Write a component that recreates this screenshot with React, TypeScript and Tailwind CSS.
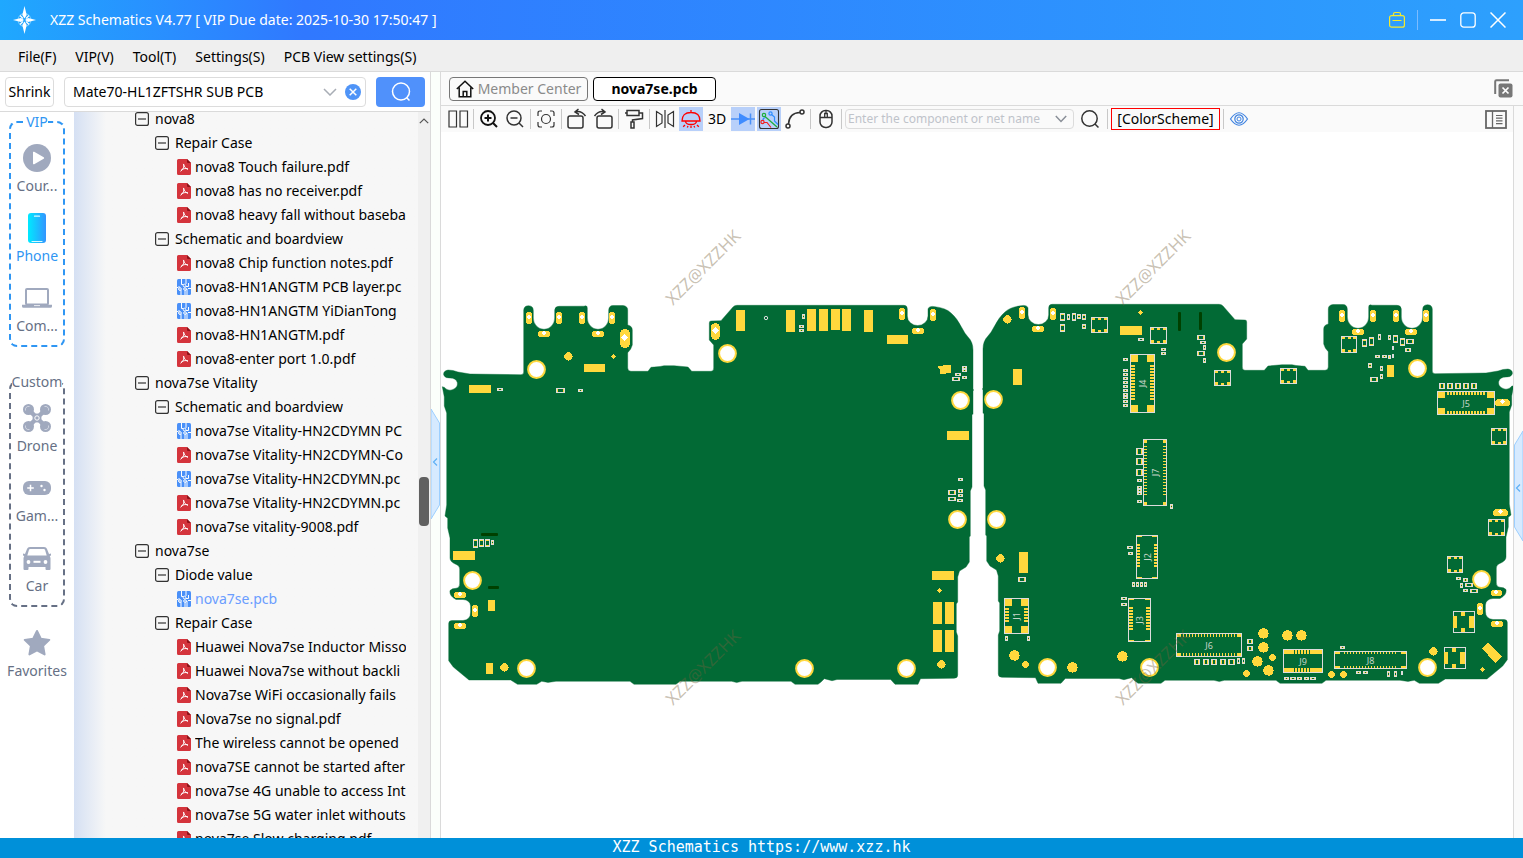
import React from "react";

type Box = [number, number, number, number];
type Point = [number, number];
type Dot = [number, number, number];

/* ---------- icons ---------- */

function LogoIcon() {
  return (
    <svg width="26" height="30" viewBox="0 0 26 30" aria-hidden="true">
      <circle cx="12.500" cy="15" r="6.500" fill="none" stroke="#7fd0ff" strokeWidth="1" />
      <path d="M12.500 1l2.200 9-2.200 3.400-2.200-3.400zM12.500 29l2.200-9-2.200-3.400-2.200 3.400zM1 15l8-2 3 2-3 2zM24 15l-8-2-3 2 3 2z" fill="#fff" />
      <path d="M8 10.500l3 3M17 10.500l-3 3M8 19.500l3-3M17 19.500l-3-3" stroke="#fff" strokeWidth="1.200" />
    </svg>
  );
}

function PdfIcon() {
  return (
    <svg width="14" height="16" viewBox="0 0 14 16" className="shrink-0" aria-hidden="true">
      <path d="M1.500 0H10l4 4v10.500a1.500 1.500 0 0 1-1.500 1.500h-11A1.500 1.500 0 0 1 0 14.500v-13A1.500 1.500 0 0 1 1.500 0z" fill="#d4343c" />
      <path d="M10 0l4 4h-3a1 1 0 0 1-1-1z" fill="#8e1218" />
      <path d="M6.600 5.200c.9 1 .3 2.600-.5 4.200-.7 1.300-1.500 2.300-2.300 2.700M6.600 5.600c.2 2 1.200 3.300 4 4.700M4.600 10.700c1.500-1 3.500-1.400 5.900-1.100" fill="none" stroke="#fff" strokeWidth="1" strokeLinecap="round" />
    </svg>
  );
}

function PcbIcon() {
  return (
    <svg width="14" height="16" viewBox="0 0 14 16" className="shrink-0" aria-hidden="true">
      <rect width="14" height="16" rx="1.500" fill="#4a90f8" />
      <path d="M4.500 0v5.500h2M9 0v5M9 7.500h2.500V4M14 9.500h-3M2 7v4M2 11h2v5M8 16v-4.500l2-1.500V16M0 8.500h1" fill="none" stroke="#fff" strokeWidth="1" />
      <g fill="#4a90f8" stroke="#fff" strokeWidth="1">
        <circle cx="7.500" cy="6.500" r="1.300" />
        <circle cx="3" cy="10" r="1.300" />
        <circle cx="8" cy="10" r="1.300" />
      </g>
    </svg>
  );
}

function CollapseIcon() {
  return (
    <svg width="14" height="14" viewBox="0 0 14 14" className="shrink-0" aria-hidden="true">
      <rect x=".6" y=".6" width="12.800" height="12.800" rx="2" fill="none" stroke="#333" strokeWidth="1.200" />
      <path d="M3 7h8" stroke="#333" strokeWidth="1.200" />
    </svg>
  );
}

function CourseIcon() {
  return (
    <svg width="28" height="28" viewBox="0 0 28 28" aria-hidden="true">
      <circle cx="14" cy="14" r="14" fill="#a0a9be" />
      <path d="M10 8.500v11a.8.800 0 0 0 1.200.7l9.500-5.500a.8.800 0 0 0 0-1.400l-9.500-5.500a.8.800 0 0 0-1.200.7z" fill="#fff" />
    </svg>
  );
}

function PhoneIcon() {
  return (
    <svg width="18" height="30" viewBox="0 0 18 30" aria-hidden="true">
      <defs>
        <linearGradient id="phone-fill" x1="0" x2="1" y1="0" y2="0">
          <stop offset="0" stopColor="#00eaff" />
          <stop offset="1" stopColor="#3395ff" />
        </linearGradient>
      </defs>
      <rect width="18" height="30" rx="3" fill="url(#phone-fill)" />
      <path d="M6.500 3.200h5M4 28.500h10" stroke="#d8fbff" strokeWidth="1.200" strokeLinecap="round" />
    </svg>
  );
}

function LaptopIcon() {
  return (
    <svg width="30" height="20" viewBox="0 0 30 20" aria-hidden="true">
      <rect x="4" y="1" width="22" height="15.500" rx="1" fill="none" stroke="#a0a9be" strokeWidth="2" />
      <path d="M0 16.800h30v1.400a1.500 1.500 0 0 1-1.500 1.500h-27A1.500 1.500 0 0 1 0 18.200z" fill="#a0a9be" />
      <path d="M12 17.600h6" stroke="#fff" strokeWidth=".8" />
    </svg>
  );
}

function DroneIcon() {
  return (
    <svg width="28" height="28" viewBox="0 0 28 28" aria-hidden="true">
      <path d="M6 6l16 16M22 6L6 22" stroke="#a0a9be" strokeWidth="4.500" />
      <g fill="#a0a9be">
        <circle cx="5.500" cy="5.500" r="5.500" />
        <circle cx="22.500" cy="5.500" r="5.500" />
        <circle cx="5.500" cy="22.500" r="5.500" />
        <circle cx="22.500" cy="22.500" r="5.500" />
        <circle cx="14" cy="14" r="4.500" />
      </g>
      <g fill="none" stroke="#dde1ea" strokeWidth=".8">
        <path d="M2.500 6.500a3.200 3.200 0 0 1 4-4M25.500 6.500a3.200 3.200 0 0 0-4-4M2.500 21.500a3.200 3.200 0 0 0 4 4M25.500 21.500a3.200 3.200 0 0 1-4 4" />
      </g>
      <circle cx="14" cy="14" r="2.200" fill="none" stroke="#fff" strokeWidth="1" />
    </svg>
  );
}

function GameIcon() {
  return (
    <svg width="28" height="14" viewBox="0 0 28 14" aria-hidden="true">
      <rect width="28" height="14" rx="6" fill="#a0a9be" />
      <path d="M7.500 3.700v6.600M4.200 7h6.600" stroke="#fff" strokeWidth="1.500" />
      <circle cx="18.500" cy="5" r="1.200" fill="#fff" />
      <circle cx="21.500" cy="9" r="1.200" fill="#fff" />
    </svg>
  );
}

function CarIcon() {
  return (
    <svg width="28" height="23" viewBox="0 0 28 23" aria-hidden="true">
      <path d="M7 0h14c1.500 0 2.500.7 3 2l2 5 2-.5v2l-1.200.5.7 2V22a1 1 0 0 1-1 1h-3a1 1 0 0 1-1-1v-2H5.500v2a1 1 0 0 1-1 1h-3a1 1 0 0 1-1-1V11l.7-2L0 8.500v-2L2 7l2-5C4.500.7 5.500 0 7 0zM7.200 2c-.6 0-1 .3-1.200.8L4.300 8.500h19.400L22 2.800c-.2-.5-.6-.8-1.200-.8z" fill="#a0a9be" />
      <circle cx="5.500" cy="15" r="1.900" fill="#fff" />
      <circle cx="22.500" cy="15" r="1.900" fill="#fff" />
      <rect x="10.500" y="13.800" width="7" height="2" fill="#fff" />
    </svg>
  );
}

function StarIcon() {
  return (
    <svg width="28" height="28" viewBox="0 0 28 28" aria-hidden="true">
      <path d="M14 2l3.800 7.700 8.500 1.200-6.200 6 1.500 8.500L14 21.400l-7.600 4 1.500-8.500-6.200-6 8.500-1.200z" fill="#a0a9be" stroke="#a0a9be" strokeWidth="2" strokeLinejoin="round" />
    </svg>
  );
}

function Glyph({ children, size = 22 }: { children: React.ReactNode; size?: number }) {
  return (
    <svg width={size} height={size} viewBox="0 0 22 22" fill="none" stroke="#333" strokeWidth="1.500" aria-hidden="true">
      {children}
    </svg>
  );
}

/* ---------- tree ---------- */

type Kind = "group" | "folder" | "pdf" | "pcb";
const tree: { kind: Kind; label: string; current?: boolean }[] = [
  { kind: "group", label: "nova8" },
  { kind: "folder", label: "Repair Case" },
  { kind: "pdf", label: "nova8 Touch failure.pdf" },
  { kind: "pdf", label: "nova8 has no receiver.pdf" },
  { kind: "pdf", label: "nova8 heavy fall without baseba" },
  { kind: "folder", label: "Schematic and boardview" },
  { kind: "pdf", label: "nova8 Chip function notes.pdf" },
  { kind: "pcb", label: "nova8-HN1ANGTM PCB layer.pc" },
  { kind: "pcb", label: "nova8-HN1ANGTM YiDianTong" },
  { kind: "pdf", label: "nova8-HN1ANGTM.pdf" },
  { kind: "pdf", label: "nova8-enter port 1.0.pdf" },
  { kind: "group", label: "nova7se Vitality" },
  { kind: "folder", label: "Schematic and boardview" },
  { kind: "pcb", label: "nova7se Vitality-HN2CDYMN PC" },
  { kind: "pdf", label: "nova7se Vitality-HN2CDYMN-Co" },
  { kind: "pcb", label: "nova7se Vitality-HN2CDYMN.pc" },
  { kind: "pdf", label: "nova7se Vitality-HN2CDYMN.pc" },
  { kind: "pdf", label: "nova7se vitality-9008.pdf" },
  { kind: "group", label: "nova7se" },
  { kind: "folder", label: "Diode value" },
  { kind: "pcb", label: "nova7se.pcb", current: true },
  { kind: "folder", label: "Repair Case" },
  { kind: "pdf", label: "Huawei Nova7se Inductor Misso" },
  { kind: "pdf", label: "Huawei Nova7se without backli" },
  { kind: "pdf", label: "Nova7se WiFi occasionally fails" },
  { kind: "pdf", label: "Nova7se no signal.pdf" },
  { kind: "pdf", label: "The wireless cannot be opened" },
  { kind: "pdf", label: "nova7SE cannot be started after" },
  { kind: "pdf", label: "nova7se 4G unable to access Int" },
  { kind: "pdf", label: "nova7se 5G water inlet withouts" },
  { kind: "pdf", label: "nova7se Slow charging.pdf" },
];

const indent: Record<Kind, string> = {
  group: "pl-[61px] gap-1.5",
  folder: "pl-[81px] gap-1.5",
  pdf: "pl-[103px] gap-1",
  pcb: "pl-[103px] gap-1",
};

function FileTree() {
  return (
    <ul className="-mt-[5px] pr-3">
      {tree.map((node, i) => (
        <li key={i}>
          <button
            type="button"
            className={`flex h-6 w-full items-center overflow-hidden text-left whitespace-nowrap ${indent[node.kind]} ${node.current ? "text-[#6a9dff]" : "text-black"}`}
          >
            {node.kind === "pdf" ? <PdfIcon /> : node.kind === "pcb" ? <PcbIcon /> : <CollapseIcon />}
            <span className="min-w-0 flex-1 overflow-hidden">{node.label}</span>
          </button>
        </li>
      ))}
    </ul>
  );
}

/* ---------- board drawing ---------- */

const OUTLINE =
  "M443.700 375Q443 371 448 370Q453 370 458 372L470 374L521 374.700Q523.700 374.700 523.700 372V310Q524 305.700 528.700 305.700Q533.300 306 533.300 310.500V318A10.700 11.300 0 0 0 554.700 318V310Q555 306.300 559 306.300L584 306.200Q587.300 305 587.300 308V318A10.700 11.300 0 0 0 608.700 318V310Q609 305.500 613 305.500H623Q627.700 306 627.700 310V325Q632.300 326 632.300 330V345Q631 350 627.700 352.700V368Q628 371.300 631 371.300H648L651 367.300L660 366.500L664 365.700H674L688 367L691.700 371.300H711Q713.700 371.300 713.700 368V345L709.300 340V323Q709.300 321 711 321L721 320.700L733 307Q734.500 305.300 737 305.300H904Q907.300 305.300 907.300 309V316A10.300 9.500 0 0 0 928 316V309Q929 305.500 935 306.700Q946 308 951 313Q957 318 962 328Q965 334 968 337Q973 342 973 350V389L973.700 390L973 391V414.300H972V487L970.300 491V536L969.300 537V562L966 567L959.500 571L957.700 577V602L956.300 604V632L957.700 636V675Q957.700 678.300 954 678.300L920.500 678.700L918 684.300H895L890.700 679.500H837L832 680.700L824.300 678.700L821 682L818 684.300H795L791 681.300H742L736.700 682.600L731.700 681.300H680L676 684.300H634L630 681.300H556L548 682.400L541.700 681.300L536.700 684.300H517.500L510.700 680H469L453.300 667L448.700 660.700V623.500Q448.700 620.500 452 620.500H463Q470.600 620 470.600 612V606Q470 600 463 599.500H456Q449 596 450 590.500Q452 588.300 456 588.300Q459.700 588 459.700 584V569Q459.700 566 456.700 564.700Q450 562 450 558V538L447.700 528V518.300L445 516L446.700 505V413L444.300 406V397L442.300 386.700Q445 387 446 389Q450 391.500 454 389Q458 387 457.300 382.500Q456 378 450 378Q445 378.500 443.700 375Z";

const pads: Box[] = [
  [469, 385, 22, 8], [584, 364, 21, 8], [453, 551, 22, 9], [488, 600, 7, 11], [486, 663, 7, 11],
  [736, 310, 9, 21], [786, 310, 9, 22], [807, 309, 9, 22], [819, 309, 9, 22], [831, 309, 9, 21],
  [842, 309, 9, 22], [864, 310, 9, 22], [887, 335, 21, 9], [947, 431, 22, 9], [932, 571, 22, 9],
  [933, 602, 9, 22], [945, 602, 9, 22], [933, 630, 9, 22], [945, 630, 9, 22],
  [1120, 326, 22, 9], [1013, 369, 9, 16], [1019, 552, 9, 21], [1387, 365, 7, 12],
];

const holes: Point[] = [
  [536.5, 369.5], [472.5, 580.5], [526.5, 668.5], [727.5, 353.5], [960.5, 400.5], [957.5, 519.5],
  [804.5, 668.5], [906.5, 668.5], [993.5, 399.5], [996.5, 519.5], [1047.5, 667.5], [1149.5, 667.5],
  [1226.5, 352.5], [1417.5, 368.5], [1481.5, 579.5], [1427.5, 667.5],
];

/* centre x, centre y, width, height */
const slots: Box[] = [
  [529, 318, 6, 12], [559, 318, 6, 12], [582, 318, 6, 12], [612, 318, 6, 12],
  [544, 334, 12, 6], [598, 334, 12, 6], [625, 338.5, 10, 19], [715.5, 331.5, 9, 17],
  [902, 314, 6, 12], [933, 315, 6, 12], [918, 331, 12, 6],
  [460, 595, 12, 6], [475, 611, 6, 12], [460, 626, 12, 6],
  [1022, 313, 6, 12], [1053, 314, 6, 12], [1038, 329, 12, 6],
  [1342, 316, 6, 12], [1373, 316, 6, 12], [1396, 316, 6, 12], [1426, 316, 6, 12],
  [1358, 332, 12, 6], [1411, 332, 12, 6], [1480, 609, 6, 12],
  [1502.5, 402.5, 15, 7], [1500.5, 512.5, 15, 7], [1496.5, 593, 11, 6], [1497, 624, 12, 6],
];

const dots: Dot[] = [
  [568.5, 356.5, 4], [613.5, 356.5, 2], [504.5, 667.5, 4], [939.5, 590.5, 2], [941.5, 664.5, 4],
  [1007.5, 319.5, 4], [1140.5, 312.5, 2], [1000.5, 558.5, 4], [1014.5, 655.5, 5], [1025.5, 664.5, 3],
  [1072.5, 667.5, 5], [1122.5, 656.5, 5], [1263.5, 633.5, 5], [1263.5, 647.5, 5], [1287.5, 635.5, 5],
  [1301.5, 635.5, 5], [1257.5, 661.5, 5], [1272.5, 657.5, 3], [1268.5, 670.5, 5], [1246.5, 673.5, 3],
  [1331.5, 674.5, 3], [1343.5, 674.5, 3], [1433.5, 651.5, 4], [1482.5, 669.5, 2],
];

const chips: Box[] = [
  [497, 388, 6, 3], [556, 388, 9, 5], [578, 389, 5, 3], [473, 539, 5, 9], [479, 539, 5, 8],
  [485, 539, 5, 8], [491, 540, 3, 5], [802, 314, 3, 5], [799, 325, 5, 3], [799, 329, 5, 3],
  [962, 366, 5, 3], [962, 369, 5, 3], [955, 373, 6, 3], [952, 377, 8, 4], [962, 376, 5, 3],
  [958, 478, 5, 3], [948, 490, 8, 5], [948, 497, 8, 4], [958, 489, 5, 4], [958, 494, 5, 3],
  [957, 499, 6, 3], [1060, 313, 5, 8], [1067, 314, 3, 6], [1072, 313, 4, 8], [1077, 314, 4, 5],
  [1082, 314, 4, 6], [1060, 324, 5, 8], [1082, 324, 4, 5], [1138, 338, 6, 3], [1161, 348, 5, 3],
  [1161, 352, 5, 3], [1197, 335, 8, 5], [1200, 341, 6, 3], [1203, 345, 3, 5], [1197, 351, 8, 5],
  [1203, 358, 3, 5], [1123, 358, 5, 3], [1123, 369, 5, 3], [1123, 373, 5, 3], [1123, 377, 5, 3],
  [1123, 381, 5, 3], [1123, 385, 5, 3], [1123, 389, 5, 3], [1123, 393, 5, 3], [1123, 396, 5, 3],
  [1123, 400, 5, 3], [1123, 404, 5, 3], [1136, 448, 7, 7], [1136, 458, 7, 7], [1136, 469, 7, 7],
  [1137, 479, 5, 3], [1137, 486, 5, 3], [1137, 489, 5, 3], [1137, 492, 5, 3], [1137, 500, 5, 3],
  [1170, 504, 3, 5], [1127, 546, 6, 3], [1128, 552, 5, 3], [1132, 582, 3, 5], [1136, 582, 3, 5],
  [1140, 582, 3, 5], [1144, 582, 3, 5], [1121, 597, 6, 3], [1121, 603, 6, 3], [1018, 577, 8, 5],
  [1005, 636, 3, 5], [1027, 636, 3, 5], [1194, 659, 6, 6], [1203, 659, 6, 6], [1211, 659, 6, 6],
  [1220, 659, 6, 6], [1228, 659, 7, 6], [1237, 658, 3, 6], [1242, 658, 3, 6], [1247, 639, 6, 5],
  [1247, 646, 6, 5], [1362, 339, 5, 8], [1369, 337, 5, 9], [1378, 334, 3, 6], [1388, 335, 3, 5],
  [1393, 335, 5, 8], [1400, 338, 5, 8], [1406, 339, 8, 5], [1405, 348, 6, 4], [1375, 355, 5, 3],
  [1382, 355, 5, 3], [1388, 355, 3, 4], [1392, 346, 2, 4], [1392, 354, 2, 4], [1368, 363, 4, 5],
  [1380, 366, 3, 5], [1380, 374, 3, 5], [1370, 377, 8, 5], [1439, 383, 6, 6], [1447, 383, 6, 6],
  [1455, 383, 6, 6], [1463, 383, 6, 6], [1471, 383, 6, 6], [1456, 577, 5, 3], [1463, 578, 5, 4],
  [1460, 583, 3, 5], [1465, 583, 8, 4], [1463, 589, 5, 3], [1470, 589, 8, 4], [1340, 646, 5, 3],
  [1284, 677, 5, 3], [1290, 677, 6, 3], [1297, 677, 5, 3], [1304, 677, 5, 3], [1310, 677, 6, 3],
  [1356, 671, 5, 3], [1363, 671, 5, 3], [1387, 671, 3, 6], [1394, 671, 3, 6], [1401, 671, 2, 4],
];

const sixPin: Box[] = [
  [1091, 317, 17, 16], [1150, 327, 17, 17], [1214, 370, 17, 16], [1341, 336, 16, 17],
  [1280, 368, 17, 16], [1491, 428, 16, 17], [1488, 519, 17, 17], [1447, 556, 16, 17],
];

const crystals: Point[] = [[1453, 611], [1444, 647]];

type Connector = {
  name: string;
  box: Box;
  corner: [number, number];
  pins: [number, number];
  pin: [number, number];
  vertical: boolean;
};

const connectors: Connector[] = [
  { name: "J4", box: [1130, 354, 25, 59], corner: [7, 7], pins: [365, 12], pin: [4, 2], vertical: true },
  { name: "J7", box: [1143, 439, 24, 67], corner: [3, 3], pins: [446, 17], pin: [3, 1], vertical: true },
  { name: "J2", box: [1136, 535, 22, 44], corner: [5, 1], pins: [544, 8], pin: [3, 2], vertical: true },
  { name: "J3", box: [1128, 598, 23, 44], corner: [5, 1], pins: [607, 8], pin: [4, 2], vertical: true },
  { name: "J1", box: [1004, 598, 25, 36], corner: [7, 7], pins: [608, 5], pin: [4, 2], vertical: true },
  { name: "J6", box: [1176, 633, 66, 24], corner: [4, 3], pins: [1183, 18], pin: [1, 3], vertical: false },
  { name: "J9", box: [1283, 649, 40, 24], corner: [10, 4], pins: [1295, 6], pin: [2, 4], vertical: false },
  { name: "J8", box: [1334, 651, 73, 18], corner: [5, 2], pins: [1344, 18], pin: [1, 2], vertical: false },
  { name: "J5", box: [1437, 391, 58, 24], corner: [7, 6], pins: [1447, 13], pin: [2, 3], vertical: false },
];

function ConnectorPart({ name, box, corner, pins, pin, vertical }: Connector) {
  const [x, y, w, h] = box;
  const [cw, ch] = corner;
  const [pw, ph] = pin;
  const cx = x + w / 2;
  const cy = y + h / 2;
  const marks: Box[] = [
    [x + 1, y + 1, cw, ch], [x + w - cw - 1, y + 1, cw, ch],
    [x + 1, y + h - ch - 1, cw, ch], [x + w - cw - 1, y + h - ch - 1, cw, ch],
  ];
  for (let i = 0; i < pins[1]; i++) {
    const at = pins[0] + i * 3;
    if (vertical) marks.push([x + 1, at, pw, ph], [x + w - pw - 1, at, pw, ph]);
    else marks.push([at, y + 1, pw, ph], [at, y + h - ph - 1, pw, ph]);
  }
  return (
    <g>
      <rect x={x + 0.5} y={y + 0.5} width={w - 1} height={h - 1} fill="none" stroke="#dcdcdc" />
      {marks.map(([a, b, c, d], i) => (
        <rect key={i} x={a} y={b} width={c} height={d} fill="#ffd83d" />
      ))}
      <text
        x={cx}
        y={cy}
        fontSize="9"
        fill="#c6d4c8"
        textAnchor="middle"
        dominantBaseline="central"
        transform={vertical ? `rotate(-90 ${cx} ${cy})` : undefined}
      >
        {name}
      </text>
    </g>
  );
}

function Chip({ box: [x, y, w, h] }: { box: Box }) {
  const wide = w >= h;
  return (
    <g>
      {wide ? (
        <path d={`M${x + 1.5} ${y + 1}v${h - 2}M${x + w - 1.5} ${y + 1}v${h - 2}`} stroke="#ffd83d" />
      ) : (
        <path d={`M${x + 1} ${y + 1.5}h${w - 2}M${x + 1} ${y + h - 1.5}h${w - 2}`} stroke="#ffd83d" />
      )}
      <rect x={x + 0.5} y={y + 0.5} width={w - 1} height={h - 1} fill="none" stroke="#dcdcdc" />
    </g>
  );
}

function BoardView() {
  return (
    <svg viewBox="441 132 1072 706" preserveAspectRatio="xMidYMid meet" className="h-full w-full" role="img" aria-label="nova7se.pcb board view">
      <g fill="#026a35" stroke="#026a35" strokeOpacity=".4">
        <path d={OUTLINE} />
        <path d={OUTLINE} transform="translate(1956 -1) scale(-1 1)" />
      </g>
      <g fill="#004000">
        <rect x="481" y="533" width="17" height="3" rx="1" />
        <rect x="488" y="586" width="11" height="3" rx="1" />
        <rect x="1178" y="312" width="3" height="19" rx="1" />
        <rect x="1199" y="312" width="3" height="18" rx="1" />
      </g>
      <g shapeRendering="crispEdges">
        <g fill="#ffd83d">
          {pads.map(([x, y, w, h], i) => (
            <rect key={i} x={x} y={y} width={w} height={h} />
          ))}
          <path d="M938 366h5v-1h8v8h-5v1h-6v-5h-1z" />
          <path d="M1482 648l6-6 14 15-7 6z" />
          {dots.map(([x, y, r], i) => (
            <circle key={i} cx={x} cy={y} r={r + 0.2} />
          ))}
          {slots.map(([x, y, w, h], i) => (
            <rect key={i} x={x - w / 2} y={y - h / 2} width={w} height={h} rx={Math.min(w, h) / 2} />
          ))}
        </g>
        {slots.map(([x, y, w, h], i) => {
          const r = Math.min(w, h) > 7 ? 3.5 : 2.5;
          return <path key={i} d={`M${x - 0.5 - r} ${y - 1}l${r}-${r} ${r} ${r}-${r} ${r}z`} fill="#fff" />;
        })}
        {chips.map((box, i) => (
          <Chip key={i} box={box} />
        ))}
        {sixPin.map(([x, y, w, h], i) => (
          <g key={i}>
            <rect x={x + 0.5} y={y + 0.5} width={w - 1} height={h - 1} fill="none" stroke="#dcdcdc" />
            <path
              d={`M${x + 1} ${y + 1}h3v2h-3zM${x + w - 4} ${y + 1}h3v2h-3zM${x + 1} ${y + h - 4}h3v3h-3zM${x + w - 4} ${y + h - 4}h3v3h-3zM${x + 7} ${y + 1}h3v2h-3zM${x + 7} ${y + h - 3}h3v2h-3z`}
              fill="#ffd83d"
            />
          </g>
        ))}
        {crystals.map(([x, y], i) => (
          <g key={i}>
            <rect x={x + 0.5} y={y + 0.5} width="21" height="21" fill="none" stroke="#dcdcdc" />
            <path d={`M${x} ${y + 5}h4v12h-4zM${x + 16} ${y + 5}h5v12h-5zM${x + 8} ${y + 1}h4v4h-4zM${x + 8} ${y + 17}h4v4h-4z`} fill="#ffd83d" />
          </g>
        ))}
      </g>
      <circle cx="766" cy="318" r="1.700" fill="none" stroke="#dcdcdc" />
      {holes.map(([x, y], i) => (
        <circle key={i} cx={x} cy={y} r="8.400" fill="#fff" stroke="#ffd83d" strokeWidth="2" />
      ))}
      {connectors.map((c) => (
        <ConnectorPart key={c.name} {...c} />
      ))}
      {([[673, 306], [1123, 306], [673, 706], [1123, 706]] as Point[]).map(([x, y], i) => (
        <text key={i} fontSize="17" fill="#75613e" fillOpacity=".4" transform={`translate(${x} ${y}) rotate(-45)`}>
          XZZ@XZZHK
        </text>
      ))}
    </svg>
  );
}

/* ---------- chrome ---------- */

function NavItem({ icon, label, active }: { icon: React.ReactNode; label: string; active?: boolean }) {
  return (
    <button type="button" className={`flex w-full flex-col items-center gap-0.5 leading-5 ${active ? "text-[#2f96f3]" : "text-[#667085]"}`}>
      <span className="flex h-8 items-center">{icon}</span>
      <span>{label}</span>
    </button>
  );
}

function Tool({ label, on, children, wide }: { label: string; on?: boolean; children: React.ReactNode; wide?: boolean }) {
  return (
    <button
      type="button"
      aria-label={label}
      className={`flex h-6 shrink-0 items-center justify-center ${wide ? "w-7" : "w-6"} ${on ? "bg-[#b8d0fa]" : ""}`}
    >
      {children}
    </button>
  );
}

function Divider() {
  return <span className="mx-px h-5 w-px shrink-0 bg-[#c8c8c8]" />;
}

export default function App() {
  return (
    <div className="flex h-screen flex-col overflow-hidden bg-white font-['Noto_Sans',sans-serif] text-sm text-black">
      <header className="flex h-10 shrink-0 items-center bg-linear-to-r from-[#1fa8fe] via-[#3078ff] via-20% to-[#2da0fd] pr-[17px] pl-3 text-white">
        <LogoIcon />
        <h1 className="ml-3 flex-1">XZZ Schematics V4.77 [ VIP Due date: 2025-10-30 17:50:47 ]</h1>
        <div className="flex items-center">
          <button type="button" aria-label="Toolbox" className="mr-3">
            <svg width="16" height="18" viewBox="0 0 16 18" fill="none" stroke="#f5ea2c" strokeWidth="1.200" aria-hidden="true">
              <rect x=".6" y="4.600" width="14.800" height="11.600" rx="2" />
              <path d="M4.500 4.500V3q0-1.500 1.500-1.500h4q1.500 0 1.500 1.500v1.500M3.500 9.500h9" />
            </svg>
          </button>
          <span className="mr-3 h-5 w-px bg-[#7cbcff]" />
          <div className="flex gap-3.5">
            <button type="button" aria-label="Minimize">
              <svg width="16" height="16" viewBox="0 0 16 16" aria-hidden="true"><path d="M0 8h16" stroke="#fff" strokeWidth="1.600" /></svg>
            </button>
            <button type="button" aria-label="Maximize">
              <svg width="16" height="16" viewBox="0 0 16 16" aria-hidden="true"><rect x=".8" y=".8" width="14.400" height="14.400" rx="3" fill="none" stroke="#fff" strokeWidth="1.300" /></svg>
            </button>
            <button type="button" aria-label="Close">
              <svg width="16" height="16" viewBox="0 0 16 16" aria-hidden="true"><path d="M.5.5l15 15M15.500.5l-15 15" stroke="#fff" strokeWidth="1.500" /></svg>
            </button>
          </div>
        </div>
      </header>

      <nav className="flex h-8 shrink-0 items-center gap-[19px] border-b border-[#dadada] bg-[#efefef] pt-0.5 pl-[18px]">
        {["File(F)", "VIP(V)", "Tool(T)", "Settings(S)", "PCB View settings(S)"].map((m) => (
          <button key={m} type="button">{m}</button>
        ))}
      </nav>

      <div className="flex min-h-0 flex-1">
        <aside className="flex w-[431px] shrink-0 flex-col border-r border-[#dadada]">
          <div className="flex h-10 shrink-0 items-center border-b border-[#dadada] pt-px pr-[5px] pl-[5px]">
            <button type="button" className="h-[30px] w-[49px] rounded border border-[#dcdcdc]">Shrink</button>
            <div className="mr-2.5 ml-2.5 flex h-[30px] min-w-0 flex-1 items-center rounded border border-[#dcdcdc] pr-1 pl-2">
              <input aria-label="Search model" defaultValue="Mate70-HL1ZFTSHR SUB PCB" className="min-w-0 flex-1 bg-transparent outline-none" />
              <button type="button" aria-label="Show history" className="mr-2">
                <svg width="14" height="8" viewBox="0 0 14 8" fill="none" stroke="#a8adb5" strokeWidth="1.500" aria-hidden="true"><path d="M1 1l6 6 6-6" /></svg>
              </button>
              <button type="button" aria-label="Clear">
                <svg width="16" height="16" viewBox="0 0 16 16" aria-hidden="true">
                  <circle cx="8" cy="8" r="8" fill="#4f94f7" />
                  <path d="M4.700 4.700l6.600 6.600M11.300 4.700l-6.600 6.600" stroke="#fff" strokeWidth="1.500" />
                </svg>
              </button>
            </div>
            <button type="button" aria-label="Search" className="flex h-[30px] w-[49px] items-center justify-center rounded-sm bg-[#5091fb]">
              <svg width="20" height="20" viewBox="0 0 20 20" fill="none" stroke="#fff" strokeWidth="1.500" aria-hidden="true">
                <circle cx="10" cy="9.500" r="8.500" />
                <path d="M15.500 15.500l3 3" />
              </svg>
            </button>
          </div>

          <div className="flex min-h-0 flex-1">
            <nav className="flex w-[74px] shrink-0 flex-col overflow-hidden bg-white">
              <fieldset className="ml-[9px] flex w-14 min-w-0 flex-col gap-4 rounded-lg border-2 border-dashed border-[#2f96f3] pt-2.5 pb-[9px]">
                <legend className="mx-auto leading-5 text-[#2f96f3]">VIP</legend>
                <NavItem icon={<CourseIcon />} label="Cour..." />
                <NavItem icon={<PhoneIcon />} label="Phone" active />
                <NavItem icon={<LaptopIcon />} label="Com..." />
              </fieldset>
              <fieldset className="mt-[25px] ml-[9px] flex w-14 min-w-0 flex-col gap-4 rounded-lg border-2 border-dashed border-[#667085] pt-2.5 pb-[9px]">
                <legend className="mx-auto leading-5 text-[#667085]">Custom</legend>
                <NavItem icon={<DroneIcon />} label="Drone" />
                <NavItem icon={<GameIcon />} label="Gam..." />
                <NavItem icon={<CarIcon />} label="Car" />
              </fieldset>
              <div className="mt-5">
                <NavItem icon={<StarIcon />} label="Favorites" />
              </div>
            </nav>

            <div className="min-w-0 flex-1 overflow-hidden bg-[#f7f7f7] bg-linear-to-r from-[#d5e0f3] to-[#f7f7f7] to-[32px]">
              <FileTree />
            </div>

            <div className="flex w-3 shrink-0 flex-col items-center bg-[#f0f0f0]">
              <svg width="10" height="6" viewBox="0 0 10 6" fill="none" stroke="#555" strokeWidth="1.200" className="mt-1.5" aria-hidden="true"><path d="M.8 5.200L5 1l4.200 4.200" /></svg>
              <span className="mt-[353px] h-[49px] w-2.5 rounded-sm bg-[#606060]" />
            </div>
          </div>
        </aside>

        <div className="flex w-2.5 shrink-0 flex-col border-r border-[#dadada] bg-[#fbfffb] pt-[337px]">
          <button type="button" aria-label="Collapse side panel">
            <svg width="9" height="110" viewBox="0 0 9 110" fill="none" aria-hidden="true">
              <path d="M0 0l8.500 14v82L0 110z" fill="#d6eaff" stroke="#9ccfff" />
              <path d="M6 49.500L2.500 53 6 56.500" stroke="#5fb0f5" strokeWidth="1.200" />
            </svg>
          </button>
        </div>

        <main className="flex min-w-0 flex-1 flex-col">
          <div className="flex h-[34px] shrink-0 items-center gap-[5px] border-b border-[#dadada] bg-[#fafafa] pr-2.5 pl-2">
            <button type="button" className="flex h-6 w-[139px] items-center justify-center gap-1 rounded border border-[#777] text-[#8a8a8a]">
              <svg width="18" height="18" viewBox="0 0 18 18" fill="none" stroke="#111" strokeWidth="1.500" aria-hidden="true">
                <path d="M.8 9L9 1.200 17.200 9M3.200 7.500v9.300h11.600V7.500M7.200 16.500v-5h3.600v5" />
              </svg>
              Member Center
            </button>
            <button type="button" className="h-6 w-[123px] rounded border border-black bg-white font-bold">nova7se.pcb</button>
            <button type="button" aria-label="Close all tabs" className="ml-auto">
              <svg width="19" height="19" viewBox="0 0 19 19" aria-hidden="true">
                <path d="M1.200 15V2.500q0-1.300 1.300-1.300H15" fill="none" stroke="#777" strokeWidth="2" />
                <rect x="4.500" y="4.500" width="14" height="14" rx="2" fill="#777" />
                <path d="M8.500 8.500l6 6M14.500 8.500l-6 6" stroke="#fff" strokeWidth="1.700" />
              </svg>
            </button>
          </div>

          <div className="flex min-h-0 flex-1">
            <section className="flex min-w-0 flex-1 flex-col">
              <div className="flex h-[26px] shrink-0 items-center gap-0.5 bg-[#fafafa] pr-1.5 pl-[5px]">
                <Tool label="Split view"><Glyph><path d="M2 3h7.500v16H2zM13 3h7.500v16H13z" strokeWidth="1.200" /></Glyph></Tool>
                <Divider />
                <Tool label="Zoom in"><Glyph><circle cx="10" cy="10" r="7" strokeWidth="1.800" stroke="#111" /><path d="M15 15l4 4M6.500 10h7M10 6.500v7" strokeWidth="2" stroke="#111" /></Glyph></Tool>
                <Tool label="Zoom out"><Glyph><circle cx="10" cy="10" r="7" /><path d="M15 15l4 4M6.500 10h7" /></Glyph></Tool>
                <Divider />
                <Tool label="Fit"><Glyph><path d="M3 8V5q0-2 2-2h2M15 3h2q2 0 2 2v3M19 14v3q0 2-2 2h-2M7 19H5q-2 0-2-2v-3" strokeWidth="1.200" /><circle cx="11" cy="11" r="4.500" strokeWidth="1.200" /></Glyph></Tool>
                <Divider />
                <Tool label="Rotate left"><Glyph><rect x="2" y="8" width="15" height="12" rx="2" /><path d="M9 4q6-2 10.500 4M12.500 1L9 4l4 2.500" /></Glyph></Tool>
                <Tool label="Rotate right"><Glyph><rect x="5" y="8" width="15" height="12" rx="2" /><path d="M13 4Q7 2 2.500 8M9.500 1L13 4 9 6.500" /></Glyph></Tool>
                <Divider />
                <Tool label="Paint"><Glyph><path d="M4 2.500h12v5H4zM4 5H2M16 5h3.500v5.500L9.500 12v2M8 14h3v6H8z" /></Glyph></Tool>
                <Divider />
                <Tool label="Mirror"><Glyph><path d="M2.500 3.500L8 7v8l-5.500 3.500zM19.500 3.500L14 7v8l5.500 3.500zM11 2v18" strokeWidth="1.200" /></Glyph></Tool>
                <Tool label="Lamp" on><Glyph><path d="M2 13q0-8.500 9-8.500T20 13zM11 4.500V2M5.500 13q0 3.500 5.500 3.500t5.500-3.500M5 17l-1.800 1.800M17 17l1.800 1.800M11 17.800v2.200M8 18l-.7 1.500M14 18l.7 1.500" stroke="#f00" strokeWidth="1.300" /></Glyph></Tool>
                <Tool label="3D">3D</Tool>
                <Tool label="Diode mode" on><svg width="24" height="22" viewBox="0 0 24 22" aria-hidden="true"><path d="M0 11h24M19.500 5.500v11" stroke="#4a90f8" strokeWidth="1.500" /><path d="M8 5l10.500 6L8 17z" fill="#3f8cff" /></svg></Tool>
                <Tool label="Net colors" on><Glyph><rect x="1.500" y="1.500" width="19" height="19" rx="2" strokeWidth="1.100" /><circle cx="12.500" cy="5.500" r="1.600" stroke="#2f8dff" strokeWidth="1.200" /><path d="M13.500 6.500l3 2.500v4l3.500 3.500M5 12q0-2 2.500-2.500" stroke="#2f8dff" strokeWidth="1.200" /><circle cx="6" cy="7" r="1.700" stroke="#1fae3b" strokeWidth="1.200" /><path d="M7 8.500L19 19" stroke="#1fae3b" strokeWidth="1.300" /><circle cx="4.500" cy="14" r="1.600" stroke="#f02020" strokeWidth="1.200" /><path d="M6 14.500l3 0 4 5" stroke="#f02020" strokeWidth="1.200" /></Glyph></Tool>
                <Tool label="Curve"><Glyph><circle cx="18" cy="4" r="2" /><circle cx="4" cy="18" r="2" /><path d="M4.500 16Q5 5 16 4.500" /></Glyph></Tool>
                <Divider />
                <Tool label="Mouse"><Glyph><rect x="5" y="2.500" width="12" height="17" rx="5.500" /><path d="M5 9.500h12M11 2.500v3M9.700 5.500h2.600v4H9.700z" strokeWidth="1.300" /></Glyph></Tool>
                <Divider />
                <div className="flex h-5 w-[229px] items-center rounded-sm border border-[#dcdcdc] pr-1.5 pl-0.5">
                  <input aria-label="Component or net name" placeholder="Enter the component or net name" className="min-w-0 flex-1 bg-transparent text-xs outline-none placeholder:text-[#bfc3ca]" />
                  <button type="button" aria-label="Show names" className="ml-1">
                    <svg width="12" height="8" viewBox="0 0 12 8" fill="none" stroke="#8a8f98" strokeWidth="1.500" aria-hidden="true"><path d="M.8 1L6 6.500 11.200 1" /></svg>
                  </button>
                </div>
                <Tool label="Find" wide><Glyph><circle cx="10.500" cy="10.500" r="7.700" /><path d="M16 16l3.500 3.500" /></Glyph></Tool>
                <Divider />
                <button type="button" className="h-[22px] w-[109px] shrink-0 border border-[#f00]">[ColorScheme]</button>
                <Divider />
                <Tool label="Show layers"><Glyph><path d="M2.500 11q8.500-12.500 17 0-8.500 12.500-17 0z" stroke="#3f83e0" strokeWidth="1.200" /><circle cx="11" cy="11" r="4.200" stroke="#3f83e0" strokeWidth="1.200" /><circle cx="11" cy="11" r="2" stroke="#3f83e0" strokeWidth="1" /></Glyph></Tool>
                <button type="button" aria-label="Toggle list" className="ml-auto">
                  <svg width="22" height="19" viewBox="0 0 22 19" fill="none" stroke="#666" aria-hidden="true">
                    <rect x="1" y="1" width="20" height="17" strokeWidth="1.800" />
                    <path d="M7.500 1v17" strokeWidth="1.300" />
                    <path d="M11 5.500h6.500M11 8.200h6.500M11 10.900h6.500M11 13.600h6.500" strokeWidth="1.200" />
                  </svg>
                </button>
              </div>
              <div className="min-h-0 flex-1 bg-white">
                <BoardView />
              </div>
            </section>

            <div className="flex w-2.5 shrink-0 flex-col border-l border-[#dadada] bg-[#fafafa] pt-[325px]">
              <button type="button" aria-label="Open properties">
                <svg width="9" height="110" viewBox="0 0 9 110" fill="none" aria-hidden="true">
                  <path d="M9 0L.5 14v82L9 110z" fill="#d6eaff" stroke="#9ccfff" />
                  <path d="M6 53.500L2.500 57 6 60.500" stroke="#5fb0f5" strokeWidth="1.200" />
                </svg>
              </button>
            </div>
          </div>
        </main>
      </div>

      <footer className="flex h-5 shrink-0 items-center justify-center bg-[#0090d9] font-['DejaVu_Sans_Mono',monospace] text-[15px] text-white">
        XZZ Schematics https://www.xzz.hk
      </footer>
    </div>
  );
}
